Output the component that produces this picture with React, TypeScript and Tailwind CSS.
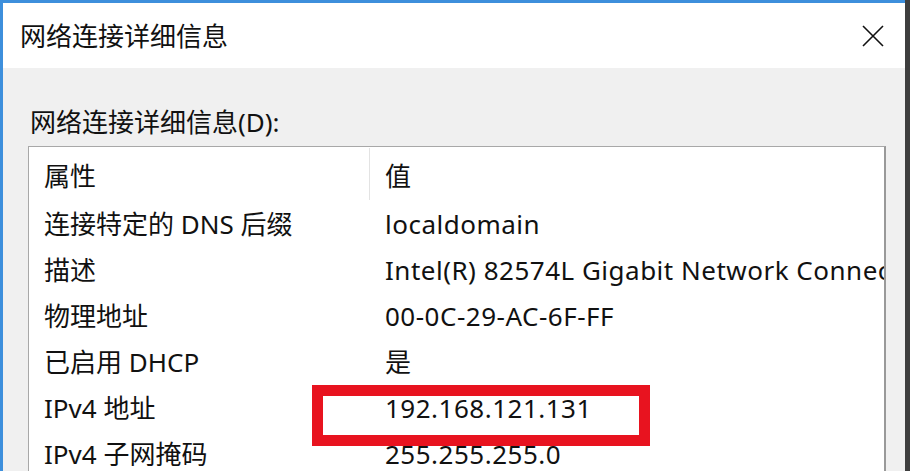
import React from "react";

const rows: [string, string][] = [
  ["连接特定的 DNS 后缀", "localdomain"],
  ["描述", "Intel(R) 82574L Gigabit Network Connection"],
  ["物理地址", "00-0C-29-AC-6F-FF"],
  ["已启用 DHCP", "是"],
  ["IPv4 地址", "192.168.121.131"],
  ["IPv4 子网掩码", "255.255.255.0"],
];

const font = { fontFamily: '"Noto Sans", "Noto Sans CJK SC", sans-serif' };

const App: React.FC = () => {
  return (
    <div className="relative w-[910px] h-[471px] overflow-hidden flex bg-[#3e3e3e] text-[#111]" style={font}>
      <div className="w-[905px] shrink-0 flex flex-col border-l-[3px] border-t-[3px] border-[#3d8fdc] bg-[#f0f0f0]">
        {/* title bar */}
        <div className="h-[65px] shrink-0 bg-white flex items-center justify-between pl-[17px] pr-[20px]">
          <span className="text-[26px] leading-none">网络连接详细信息</span>
          <svg width="24" height="24" viewBox="0 0 24 24" className="text-[#111]">
            <path d="M2 2 L22 22 M22 2 L2 22" stroke="currentColor" strokeWidth="1.6" fill="none" />
          </svg>
        </div>

        <div className="pt-[37px] pl-[25px] flex flex-col">
          <div className="text-[26px] leading-[34px] pl-[2px]">网络连接详细信息(D):</div>
          <div className="mt-[7px] w-[858px] border border-[#a8a8a8] border-r-2 border-r-[#999] bg-white overflow-hidden">
            <div className="h-[54px] flex items-center text-[26px]">
              <div className="w-[340px] h-full flex items-center pl-[15px] pt-[4px]">属性</div>
              <div className="w-px h-[52px] bg-[#e3e3e3]" />
              <div className="pl-[15px] pt-[4px]">值</div>
            </div>
            {rows.map(([k, v]) => (
              <div key={k} className="h-[46px] flex items-center text-[26px] whitespace-nowrap">
                <div className="w-[341px] shrink-0 pl-[15px]">{k}</div>
                <div className="pl-[15px] tracking-[0.5px]">{v}</div>
              </div>
            ))}
          </div>
        </div>
      </div>

      {/* annotation */}
      <div className="absolute left-[312px] top-[385px] w-[338px] h-[61px] border-[11px] border-[#e8131f]" />
    </div>
  );
};

export default App;
